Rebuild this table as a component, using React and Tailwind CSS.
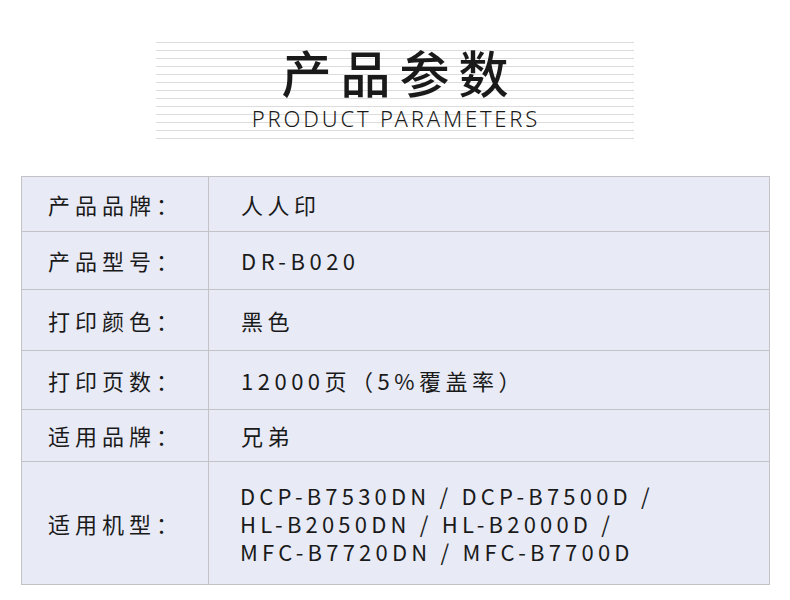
export default function App() {
  const rows = [
    { label: '产品品牌：', value: '人人印', h: 'h-[55px]' },
    { label: '产品型号：', value: 'DR-B020', h: 'h-[58px]' },
    { label: '打印颜色：', value: '黑色', h: 'h-[61px]' },
    { label: '打印页数：', value: '12000页（5%覆盖率）', h: 'h-[59px]' },
    { label: '适用品牌：', value: '兄弟', h: 'h-[52px]' },
  ]
  const models = [
    'DCP-B7530DN / DCP-B7500D /',
    'HL-B2050DN / HL-B2000D /',
    'MFC-B7720DN / MFC-B7700D',
  ]

  return (
    <div className="w-[790px] h-[600px] bg-white text-[#1a1a1a] font-['Noto_Sans_CJK_SC','Noto_Sans',sans-serif]">
      {/* title block with stripes behind */}
      <div className="pt-[42px] pl-[156px]">
        <div className="relative w-[478px] h-[97px] bg-[repeating-linear-gradient(to_bottom,#dcdcdc_0px,#dcdcdc_1px,transparent_1px,transparent_8px)]">
          <div className="absolute inset-0 flex flex-col items-center">
            <div className="mt-[1px] text-[50px] leading-[56px] font-medium tracking-[9px] pl-[9px]">产品参数</div>
            <div className="mt-[6px] text-[22px] leading-[26px] font-light tracking-[2.8px] pl-[2px] font-['Noto_Sans','Noto_Sans_CJK_SC',sans-serif]">PRODUCT PARAMETERS</div>
          </div>
        </div>
      </div>

      {/* params table */}
      <div className="ml-[21px] mt-[37px] w-[749px] border border-[#c3c3c6] bg-[#e8eaf6]">
        {rows.map((r, i) => (
          <div key={i} className={`flex ${r.h} border-b border-[#c3c3c6]`}>
            <div className="w-[187px] shrink-0 border-r border-[#c3c3c6] flex items-center pl-[26px] text-[22px] tracking-[5px]">
              {r.label}
            </div>
            <div className="flex items-center pl-[32px] text-[22px] tracking-[4.5px]">{r.value}</div>
          </div>
        ))}
        <div className="flex h-[122px]">
          <div className="w-[187px] shrink-0 border-r border-[#c3c3c6] flex items-center pl-[26px] text-[22px] tracking-[5px]">
            适用机型：
          </div>
          <div className="flex flex-col justify-center pl-[31px] text-[22px] leading-[28px] tracking-[4.2px]">
            {models.map((m, i) => (
              <div key={i}>{m}</div>
            ))}
          </div>
        </div>
      </div>
    </div>
  )
}
